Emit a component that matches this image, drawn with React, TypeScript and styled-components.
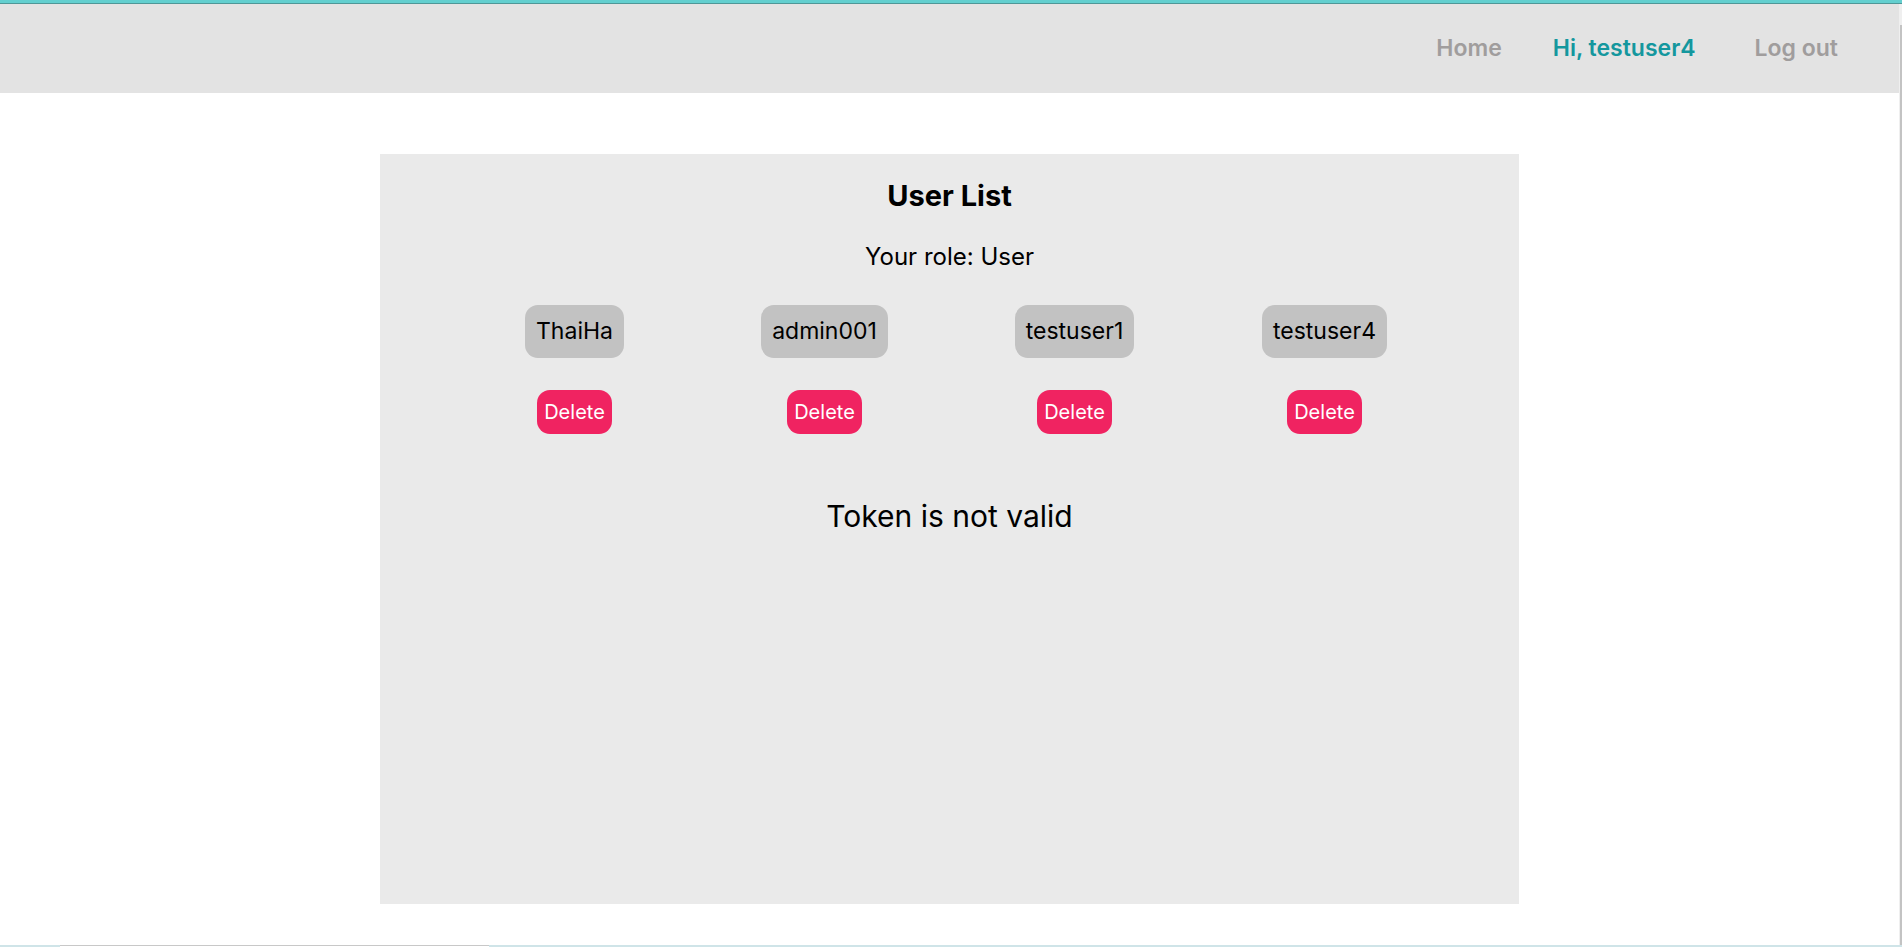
import React from "react";
import styled, { createGlobalStyle } from "styled-components";

const GlobalStyle = createGlobalStyle`
  html, body {
    margin: 0;
    padding: 0;
    background: #ffffff;
    font-family: Inter, "Noto Sans", "Liberation Sans", sans-serif;
    color: #000;
  }
  * { box-sizing: border-box; }
`;

const TopLine = styled.div`
  height: 4px;
  background: #63cfcf;
  border-bottom: 1px solid #4f9797;
`;

const Shell = styled.div`
  margin-right: 3px;
`;

const NavBar = styled.nav`
  height: 89px;
  background: #e3e3e3;
  display: flex;
  align-items: center;
  justify-content: flex-end;
  padding-right: 61px;
`;

const NavLink = styled.a<{ $gap?: number; $active?: boolean }>`
  font-size: 23px;
  font-weight: 600;
  line-height: 1.2;
  text-decoration: none;
  color: ${(p) => (p.$active ? "#14979e" : "#a09d9d")};
  margin-left: ${(p) => p.$gap ?? 0}px;
  cursor: pointer;
`;

const Panel = styled.section`
  width: 1139px;
  height: 750px;
  margin: 61px auto 0;
  background: #eaeaea;
  display: flex;
  flex-direction: column;
  align-items: center;
  padding-top: 25px;
`;

const Title = styled.h2`
  margin: 0;
  font-size: 29px;
  font-weight: 700;
  line-height: 1.2;
`;

const Role = styled.p`
  margin: 29px 0 0;
  font-size: 24px;
  font-weight: 400;
  line-height: 1.2;
`;

const UserGrid = styled.div`
  margin-top: 33px;
  display: grid;
  grid-template-columns: repeat(4, 250px);
  justify-content: center;
`;

const UserCell = styled.div`
  display: flex;
  flex-direction: column;
  align-items: center;
  gap: 32px;
`;

const NameChip = styled.div`
  background: #c2c2c2;
  border-radius: 13px;
  padding: 13px 11px;
  font-size: 23px;
  line-height: 1.2;
  color: #000;
`;

const DeleteButton = styled.button`
  background: #f02361;
  color: #ffffff;
  border: none;
  border-radius: 13px;
  padding: 10px 7px;
  font-family: Inter, "Noto Sans", "Liberation Sans", sans-serif;
  font-size: 20px;
  line-height: 1.2;
  cursor: pointer;
`;

const Message = styled.p`
  margin: 64px 0 0;
  font-size: 30px;
  font-weight: 400;
  line-height: 1.2;
`;

const ScrollTrack = styled.div`
  position: fixed;
  top: 4px;
  right: 0;
  bottom: 2px;
  width: 3px;
  background: #efefef;
  display: flex;
  justify-content: flex-end;
  padding-top: 21px;
`;

const ScrollThumb = styled.div`
  width: 2px;
  height: 100%;
  background: #c3c3c3;
`;

const BottomStrip = styled.div`
  position: fixed;
  left: 0;
  right: 0;
  bottom: 0;
  height: 2px;
  background: #cfe4e8;
  padding-left: 60px;
`;

const StripBox = styled.div`
  width: 429px;
  height: 2px;
  background: #ffffff;
  border-top: 1px solid #c8c8c8;
`;

const users = ["ThaiHa", "admin001", "testuser1", "testuser4"];

export default function App() {
  return (
    <>
      <GlobalStyle />
      <TopLine />
      <Shell>
        <NavBar>
          <NavLink>Home</NavLink>
          <NavLink $active $gap={51}>
            Hi, testuser4
          </NavLink>
          <NavLink $gap={59}>Log out</NavLink>
        </NavBar>
        <Panel>
          <Title>User List</Title>
          <Role>Your role: User</Role>
          <UserGrid>
            {users.map((u) => (
              <UserCell key={u}>
                <NameChip>{u}</NameChip>
                <DeleteButton>Delete</DeleteButton>
              </UserCell>
            ))}
          </UserGrid>
          <Message>Token is not valid</Message>
        </Panel>
      </Shell>
      <ScrollTrack>
        <ScrollThumb />
      </ScrollTrack>
      <BottomStrip>
        <StripBox />
      </BottomStrip>
    </>
  );
}
